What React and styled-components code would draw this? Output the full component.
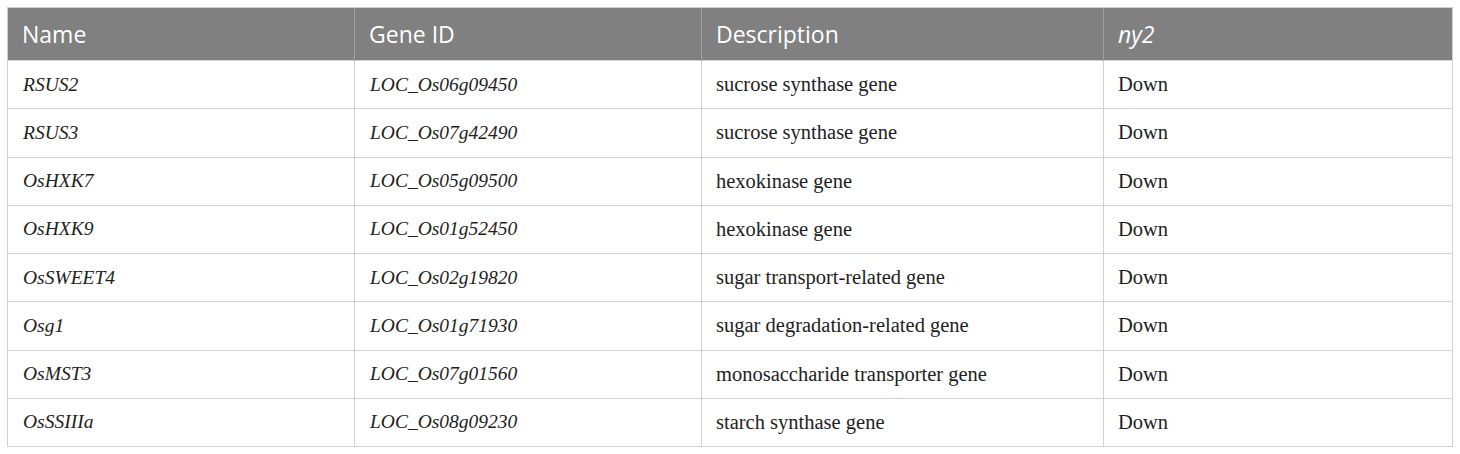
import React from "react";
import styled, { createGlobalStyle } from "styled-components";

const Global = createGlobalStyle`
  html, body { margin: 0; padding: 0; background: #ffffff; }
`;

const Page = styled.div`
  padding: 7px 8px 7px 7px;
`;

const Table = styled.table`
  border-collapse: collapse;
  width: 1445px;
  table-layout: fixed;
  border: 1px solid #cfcfcf;
`;

const HeadCell = styled.th`
  background: #808080;
  color: #ffffff;
  font-family: "Open Sans", "Noto Sans", sans-serif;
  font-weight: 400;
  font-size: 23px;
  font-style: ${(p) => (p.$italic ? "italic" : "normal")};
  text-align: left;
  height: 52px;
  padding: 0 15px 0 14px;
  border-left: 1px solid #a0a0a0;
  border-top: 1px solid #cfcfcf;
  &:first-child { border-left: 1px solid #cfcfcf; }
`;

const Cell = styled.td`
  font-family: "Liberation Serif", "Times New Roman", serif;
  font-size: ${(p) => (p.$italic ? "19.5px" : "20.5px")};
  font-style: ${(p) => (p.$italic ? "italic" : "normal")};
  color: #1e1e1e;
  height: 47.25px;
  padding: 0 15px 0 ${(p) => (p.$italic ? "15px" : "14px")};
  border: 1px solid #d2d2d2;
  vertical-align: middle;
  white-space: nowrap;
`;

const rows = [
  ["RSUS2", "LOC_Os06g09450", "sucrose synthase gene", "Down"],
  ["RSUS3", "LOC_Os07g42490", "sucrose synthase gene", "Down"],
  ["OsHXK7", "LOC_Os05g09500", "hexokinase gene", "Down"],
  ["OsHXK9", "LOC_Os01g52450", "hexokinase gene", "Down"],
  ["OsSWEET4", "LOC_Os02g19820", "sugar transport-related gene", "Down"],
  ["Osg1", "LOC_Os01g71930", "sugar degradation-related gene", "Down"],
  ["OsMST3", "LOC_Os07g01560", "monosaccharide transporter gene", "Down"],
  ["OsSSIIIa", "LOC_Os08g09230", "starch synthase gene", "Down"],
];

export default function App() {
  return (
    <Page>
      <Global />
      <Table>
        <colgroup>
          <col style={{ width: 347 }} />
          <col style={{ width: 347 }} />
          <col style={{ width: 402 }} />
          <col style={{ width: 349 }} />
        </colgroup>
        <thead>
          <tr>
            <HeadCell>Name</HeadCell>
            <HeadCell>Gene ID</HeadCell>
            <HeadCell>Description</HeadCell>
            <HeadCell $italic>ny2</HeadCell>
          </tr>
        </thead>
        <tbody>
          {rows.map((r) => (
            <tr key={r[0]}>
              <Cell $italic>{r[0]}</Cell>
              <Cell $italic>{r[1]}</Cell>
              <Cell>{r[2]}</Cell>
              <Cell>{r[3]}</Cell>
            </tr>
          ))}
        </tbody>
      </Table>
    </Page>
  );
}
